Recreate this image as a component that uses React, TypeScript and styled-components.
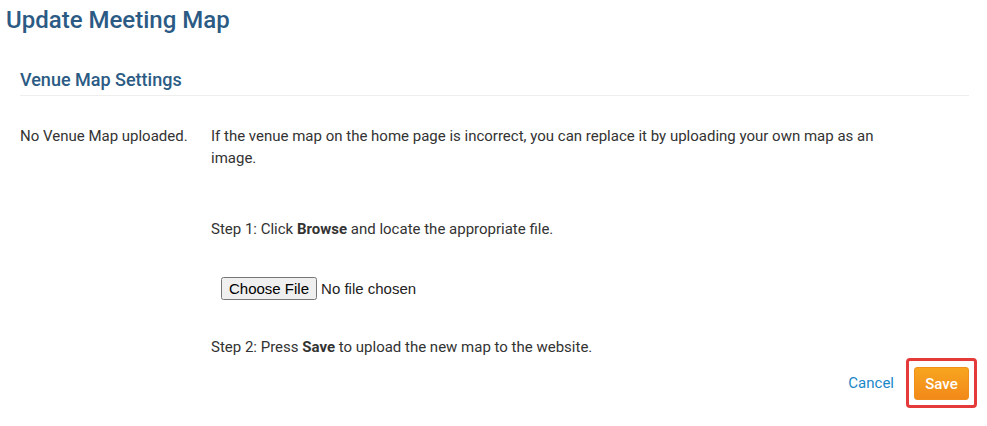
import { createGlobalStyle } from "styled-components";
import styled from "styled-components";

const GlobalStyle = createGlobalStyle`
  body {
    margin: 0;
    background: #fff;
    font-family: Roboto, "Liberation Sans", sans-serif;
    color: #333;
  }
`;

export default function App() {
  return (
    <>
      <GlobalStyle />
      <Page>
        <PageTitle>Update Meeting Map</PageTitle>
        <Section>
          <SectionTitle>Venue Map Settings</SectionTitle>
          <Row>
            <Label>No Venue Map uploaded.</Label>
            <Body>
              <Paragraph>
                If the venue map on the home page is incorrect, you can replace it by uploading your own map as an
                image.
              </Paragraph>
              <Step $top={49}>
                Step 1: Click <b>Browse</b> and locate the appropriate file.
              </Step>
              <FileRow>
                <FileInput type="file" />
              </FileRow>
              <Step $top={37}>
                Step 2: Press <b>Save</b> to upload the new map to the website.
              </Step>
            </Body>
          </Row>
          <Actions>
            <CancelLink href="#">Cancel</CancelLink>
            <Highlight>
              <SaveButton type="button">Save</SaveButton>
            </Highlight>
          </Actions>
        </Section>
      </Page>
    </>
  );
}

const Page = styled.div`
  padding: 5px 18px 0 6px;
`;

const PageTitle = styled.h1`
  margin: 0;
  font-size: 24px;
  font-weight: 500;
  line-height: 30px;
  color: #2b5b84;
`;

const Section = styled.div`
  margin-top: 34px;
  padding-left: 14px;
`;

const SectionTitle = styled.h2`
  margin: 0;
  padding-bottom: 4px;
  font-size: 18px;
  font-weight: 500;
  line-height: 22px;
  color: #2b5b84;
  border-bottom: 1px solid #eeeeee;
`;

const Row = styled.div`
  display: flex;
  margin-top: 29px;
  font-size: 15px;
  line-height: 22px;
`;

const Label = styled.div`
  width: 191px;
  flex-shrink: 0;
`;

const Body = styled.div`
  width: 680px;
`;

const Paragraph = styled.p`
  margin: 0;
`;

const Step = styled.p<{ $top: number }>`
  margin: ${(p) => p.$top}px 0 0;

  b {
    font-weight: 700;
  }
`;

const FileRow = styled.div`
  margin-top: 37px;
  padding-left: 10px;
  height: 22px;
  display: flex;
  align-items: center;
`;

const FileInput = styled.input`
  font-family: "Liberation Sans", Arial, sans-serif;
  font-size: 15px;
  color: #222;
`;

const Actions = styled.div`
  display: flex;
  justify-content: flex-end;
  align-items: center;
  gap: 12px;
  margin: 0 -8px 0 0;
`;

const CancelLink = styled.a`
  font-size: 15px;
  color: #1a87c8;
  text-decoration: none;
`;

const Highlight = styled.div`
  padding: 6px 5px 5px;
  border: 3px solid #e53a3a;
  border-radius: 4px;
`;

const SaveButton = styled.button`
  display: block;
  width: 55px;
  height: 33px;
  border: 1px solid #f0901a;
  border-radius: 3px;
  background: linear-gradient(#f8a51f, #f2891a);
  color: #fff;
  font-family: Roboto, "Liberation Sans", sans-serif;
  font-size: 15px;
  font-weight: 500;
  cursor: pointer;
`;
